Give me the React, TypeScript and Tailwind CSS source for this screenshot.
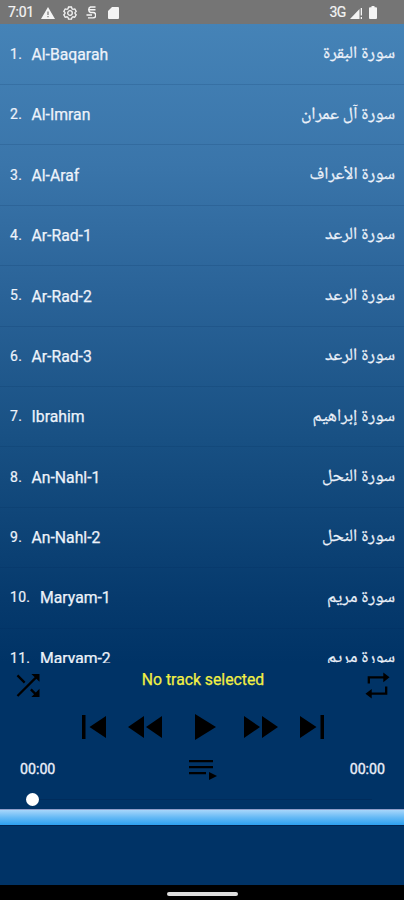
type Track = { name: string; arabic: string; width: number };

const tracks: Track[] = [
  { name: 'Al-Baqarah', arabic: 'سورة البقرة', width: 72 },
  { name: 'Al-Imran', arabic: 'سورة آل عمران', width: 94 },
  { name: 'Al-Araf', arabic: 'سورة الأعراف', width: 85.5 },
  { name: 'Ar-Rad-1', arabic: 'سورة الرعد', width: 70 },
  { name: 'Ar-Rad-2', arabic: 'سورة الرعد', width: 70 },
  { name: 'Ar-Rad-3', arabic: 'سورة الرعد', width: 70 },
  { name: 'Ibrahim', arabic: 'سورة إبراهيم', width: 82.5 },
  { name: 'An-Nahl-1', arabic: 'سورة النحل', width: 73 },
  { name: 'An-Nahl-2', arabic: 'سورة النحل', width: 73 },
  { name: 'Maryam-1', arabic: 'سورة مريم', width: 68 },
  { name: 'Maryam-2', arabic: 'سورة مريم', width: 68 },
];

function StatusBar() {
  return (
    <header className="flex h-6 shrink-0 items-center bg-[#757575] pl-2 pr-[27px] pt-px text-[14px] text-[#f4f4f4]">
      <span className="w-[33px] tracking-[-0.3px] [-webkit-text-stroke:0.2px]">7:01</span>
      <svg className="h-[12px] w-[14px]" viewBox="0 0 14 12" fill="currentColor">
        <path fillRule="evenodd" d="M7 0 14 12H0ZM6.400 4.500V8H7.600V4.500ZM6.400 9V10.300H7.600V9Z" />
      </svg>
      <svg className="ml-2 h-[14px] w-[14px]" viewBox="0 0 14 14" fill="none" stroke="currentColor">
        <path d="M5.500 1h3l.5 1.700 1 .6 1.800-.4 1.400 2.500L12 6.500v1l1.200 1.300-1.500 2.500-1.700-.5-1 .6-.5 1.700h-3L5 11.400l-1-.6-1.800.5-1.400-2.500L2 7.500v-1L.8 5.300 2.200 2.900l1.800.4 1-.6Z" strokeWidth="1.300" />
        <circle cx="7" cy="7" r="2.300" strokeWidth="1.300" />
      </svg>
      <svg className="ml-[9px] h-[13px] w-[10px]" viewBox="0 0 10 13" fill="none" stroke="currentColor" strokeWidth="1.400">
        <path d="M9.500 1H4.500a3 3 0 0 0 0 5.500H7a2.700 2.700 0 0 1 0 5.400H2M3.500 3.800H9.500M0.500 9H6" />
      </svg>
      <svg className="ml-[12px] h-[12px] w-[11px]" viewBox="0 0 11 12" fill="currentColor">
        <path d="M4 0h6q1 0 1 1v10q0 1-1 1H1q-1 0-1-1V4Z" />
      </svg>
      <span className="ml-auto tracking-[-0.4px] [-webkit-text-stroke:0.2px]">3G</span>
      <svg className="ml-[4px] h-[12px] w-[13px]" viewBox="0 0 13 12" fill="currentColor">
        <path d="M0 12 9.500 2V12ZM10.700 1H12V8.500H10.700ZM10.700 10H12V12H10.700Z" />
      </svg>
      <svg className="ml-[6px] h-[13px] w-[8px]" viewBox="0 0 8 13" fill="currentColor">
        <path d="M2.500 0h3v1.300H7q1 0 1 1V12q0 1-1 1H1q-1 0-1-1V2.300q0-1 1-1h1.500Z" />
      </svg>
    </header>
  );
}

function TrackRow({ track, index }: { track: Track; index: number }) {
  return (
    <li className="flex h-[60.4px] items-center border-b border-[#002b55]/15 pl-[10px] pr-[9px] text-[#edf2fa]">
      <span className={`${index > 8 ? 'w-[30px]' : 'w-[21.5px]'} text-[14px] tracking-[0.3px] [-webkit-text-stroke:0.2px]`}>{index + 1}.</span>
      <span className="pt-px text-[15.75px] [-webkit-text-stroke:0.25px]">{track.name}</span>
      <svg className="ml-auto h-[30px] w-[110px] overflow-visible" viewBox="0 0 110 30" fill="currentColor">
        <text x="110" y="20.5" direction="rtl" textAnchor="start" textLength={track.width} lengthAdjust="spacingAndGlyphs" fontSize="17" stroke="currentColor" strokeWidth="0.25" className="font-['Noto_Naskh_Arabic_UI','Noto_Naskh_Arabic','DejaVu_Sans',sans-serif]">
          {track.arabic}
        </text>
      </svg>
    </li>
  );
}

function Player() {
  return (
    <section className="flex h-[146px] shrink-0 flex-col bg-[#003366] text-black">
      <div className="flex h-[40px] items-start justify-between pl-[16px] pr-[14px]">
        <svg className="mt-[11px] h-[23px] w-[24px]" viewBox="0 0 24 24" fill="none" stroke="currentColor" strokeWidth="2.400">
          <path d="M1 1.500 8.500 9M1 23 21 3M15 16l6 6" />
          <path d="M15.500 0H24V8ZM24 15.500V24H15.500Z" fill="currentColor" stroke="none" />
        </svg>
        <span className="pl-[1px] pt-[5px] text-[15.75px] leading-6 text-[#f2f044] [-webkit-text-stroke:0.25px]">No track selected</span>
        <svg className="mt-[9px] h-[27px] w-[25px]" viewBox="0 0 25 28" fill="none" stroke="currentColor" strokeWidth="2.400">
          <path d="M3.500 12V5.500H20M21.500 15V22.500H5" />
          <path d="M18.500 0.500 25 5.500 18.500 10.500ZM6.500 17.500 0 22.500 6.500 27.500Z" fill="currentColor" stroke="none" />
        </svg>
      </div>
      <div className="flex h-[48px] items-center pl-[82px]">
        <svg className="h-[24px] w-[24px]" viewBox="0 0 24 24" fill="currentColor"><path d="M0 0H3.500V24H0ZM24 1V23L7.500 12Z" /></svg>
        <svg className="ml-[22px] h-[22px] w-[34px]" viewBox="0 0 34 22" fill="currentColor"><path d="M16 0V22L0 11ZM34 0V22L18 11Z" /></svg>
        <svg className="ml-[33px] h-[26px] w-[21px]" viewBox="0 0 21 26" fill="currentColor"><path d="M0 0 21 13 0 26Z" /></svg>
        <svg className="ml-[28px] h-[22px] w-[34px]" viewBox="0 0 34 22" fill="currentColor"><path d="M0 0 16 11 0 22ZM18 0 34 11 18 22Z" /></svg>
        <svg className="ml-[22px] h-[24px] w-[24px]" viewBox="0 0 24 24" fill="currentColor"><path d="M0 1 16.500 12 0 23ZM20.500 0H24V24H20.500Z" /></svg>
      </div>
      <div className="flex h-[38px] items-center justify-between pl-[20px] pr-[19px] text-[14.2px] text-[#edf0fa] [-webkit-text-stroke:0.35px]">
        <span>00:00</span>
        <svg className="h-[20px] w-[28px] text-black" viewBox="0 0 28 20" fill="currentColor">
          <path d="M0 0H24V2.200H0ZM0 6H24V8.200H0ZM0 12H17V14.200H0ZM20 12 28 16 20 20Z" />
        </svg>
        <span>00:00</span>
      </div>
      <div className="flex h-[20px] items-center pl-[25.500px] pr-[32px]">
        <span className="h-[13px] w-[13px] rounded-full bg-white" />
        <span className="h-px flex-1 bg-[#002c5c]" />
      </div>
    </section>
  );
}

export default function App() {
  return (
    <main className="flex h-[900px] w-[404px] flex-col overflow-hidden bg-[#003366] font-[Roboto,'Liberation_Sans',sans-serif]">
      <StatusBar />
      <ol className="h-[639px] shrink-0 overflow-hidden bg-[linear-gradient(180deg,#4583b7_0%,#3a75aa_22%,#2a6398_42%,#185083_65%,#063a6d_90%,#003366_100%)] pt-[0.6px]">
        {tracks.map((track, index) => <TrackRow key={track.name} track={track} index={index} />)}
      </ol>
      <Player />
      <div className="h-4 shrink-0 border-t border-[#8e9dca] bg-[linear-gradient(180deg,#a8d6fa,#65b9f5_50%,#2da0ef)]" />
      <div className="flex-1 border-t border-[#002451]" />
      <footer className="flex h-[15px] shrink-0 items-center justify-center bg-black pt-[2px]">
        <div className="h-[4px] w-[71px] rounded-sm bg-[#dedede]" />
      </footer>
    </main>
  );
}
